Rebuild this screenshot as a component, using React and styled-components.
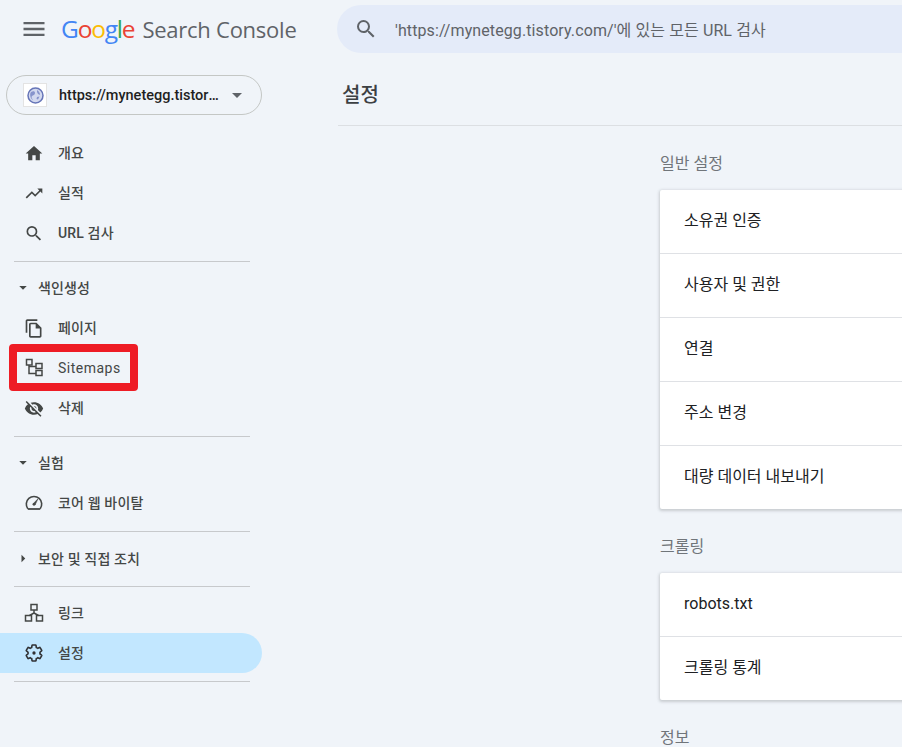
import styled, { createGlobalStyle } from "styled-components";
import {
  MdHome,
  MdTrendingUp,
  MdSearch,
  MdOutlineFileCopy,
  MdVisibilityOff,
  MdMenu,
  MdArrowDropDown,
  MdArrowRight,
} from "react-icons/md";

const KR = `Roboto, "Noto Sans CJK KR", sans-serif`;

const GlobalStyle = createGlobalStyle`
  html, body {
    margin: 0;
    padding: 0;
    height: 100%;
    overflow: hidden;
    background: #f0f4f9;
    font-family: ${KR};
  }
`;

const Page = styled.div`
  width: 902px;
  height: 747px;
  overflow: hidden;
  position: relative;
`;

const Header = styled.header`
  display: flex;
  align-items: center;
  height: 58px;
  padding-left: 20px;
`;

const MenuBtn = styled.div`
  display: flex;
  color: #5f6368;
  width: 28px;
  margin-right: 13px;
  font-size: 28px;
`;

const Logo = styled.div`
  display: flex;
  align-items: baseline;
  width: 276px;
  margin-top: -2px;
  font-family: "Open Sans", sans-serif;
  font-size: 22px;
  color: #5f6368;
  white-space: nowrap;
`;

const Letter = styled.span`
  color: ${(p) => p.$c};
  font-size: 24.5px;
  letter-spacing: -1.2px;
`;

const LogoRest = styled.span`
  margin-left: 8px;
  letter-spacing: -0.25px;
`;

const SearchBar = styled.div`
  flex: 1;
  height: 48px;
  margin-right: -60px;
  border-radius: 24px;
  background: #e4ebf9;
  display: flex;
  align-items: center;
  padding-left: 17px;
  color: #5f6368;
  font-size: 24px;
`;

const SearchText = styled.span`
  margin-left: 17px;
  font-size: 16px;
  letter-spacing: 0.1px;
  color: #5f6368;
  white-space: nowrap;
`;

const Body = styled.div`
  display: flex;
`;

const Side = styled.aside`
  width: 262px;
  flex: none;
  margin-right: 76px;
  padding-top: 17px;
`;

const Property = styled.div`
  margin-left: 6px;
  height: 38px;
  width: 238px;
  border: 1px solid #c4c7c5;
  border-radius: 20px;
  display: flex;
  align-items: center;
  padding-left: 16px;
  font-size: 14.5px;
  font-weight: 500;
  color: #1f1f1f;
  margin-bottom: 18px;
`;

const PropIcon = styled.div`
  width: 22px;
  height: 22px;
  background: #fff;
  border: 1px solid #e3e3e3;
  display: flex;
  align-items: center;
  justify-content: center;
  margin-right: 12px;
`;

const PropName = styled.span`
  width: 163px;
  overflow: hidden;
  text-overflow: ellipsis;
  white-space: nowrap;
`;

const PropArrow = styled.div`
  display: flex;
  margin-left: 3px;
  color: #5f6368;
  font-size: 24px;
`;

const NavItem = styled.div`
  display: flex;
  align-items: center;
  height: 40px;
  padding-left: 24px;
  border-radius: 0 20px 20px 0;
  background: ${(p) => (p.$active ? "#c2e7ff" : "transparent")};
  color: #444746;
  font-size: 14px;
  font-weight: 500;
  letter-spacing: 0.15px;
`;

const NavText = styled.span`
  position: relative;
  top: ${(p) => (p.$latin ? 0 : -1)}px;
  font-weight: ${(p) => (p.$latin ? 400 : 500)};
  letter-spacing: ${(p) => (p.$latin ? 0.5 : 0.15)}px;
`;

const IconBox = styled.div`
  display: flex;
  width: 20px;
  margin-right: 14px;
  font-size: 21px;
  color: #444746;
  justify-content: center;
`;

const Divider = styled.div`
  width: 236px;
  height: 1px;
  margin: ${(p) => p.$m || "8px 0 0 14px"};
  background: #c7c9cc;
`;

const Group = styled.div`
  display: flex;
  align-items: center;
  box-sizing: border-box;
  height: ${(p) => p.$h || 46}px;
  padding: ${(p) => (p.$h ? "0 0 2px 14px" : "4px 0 0 14px")};
  color: #444746;
  font-size: 14px;
  font-weight: 500;
  letter-spacing: 0.15px;
`;

const GroupArrow = styled.div`
  display: flex;
  width: 18px;
  margin-right: 6px;
  font-size: 21px;
  justify-content: center;
`;

const Main = styled.main`
  flex: 1;
  min-width: 0;
`;

const TitleBar = styled.div`
  height: 68px;
  box-sizing: border-box;
  border-bottom: 1px solid #dcdfe3;
  padding: 21px 0 0 4px;
  font-size: 20px;
  font-weight: 500;
  color: #3c4043;
`;

const Content = styled.div`
  padding-left: 322px;
`;

const SectionTitle = styled.div`
  height: 64px;
  box-sizing: border-box;
  padding-top: 24px;
  font-size: 16px;
  color: #70757a;
`;

const Card = styled.div`
  width: 500px;
  background: #fff;
  border-radius: 2px;
  box-shadow: 0 1px 3px 1px rgba(60, 64, 67, 0.22);
`;

const Row = styled.div`
  height: 63px;
  display: flex;
  align-items: center;
  padding-left: 24px;
  font-size: 16px;
  color: #202124;
  border-top: ${(p) => (p.$first ? "none" : "1px solid #dfe1e5")};
`;

const RowText = styled.span`
  position: relative;
  top: ${(p) => (p.$latin ? -1 : -3)}px;
`;

const RedMark = styled.div`
  position: absolute;
  left: 9px;
  top: 344px;
  width: 129px;
  height: 47px;
  box-sizing: border-box;
  border: 8px solid #ee1c25;
  border-radius: 4px;
`;

const GlobeIcon = () => (
  <svg width="17" height="17" viewBox="0 0 17 17">
    <circle cx="8.500" cy="8.500" r="7.500" fill="#d3d9ef" stroke="#6675b8" strokeWidth="1.500" />
    <path d="M4 5c2-1 4-1 4 1s-2 2-3 3 0 3 1 4-2-1-2.500-3S3 6 4 5zM10 3c2 1 3 3 3 5l-2-1-1-2z" fill="#8794cc" />
    <path d="M10 10l2.500-.5-1.500 3-1.500-.5z" fill="#8794cc" />
  </svg>
);

const SitemapIcon = () => (
  <svg width="20" height="20" viewBox="0 0 20 20" fill="none" stroke="#444746" strokeWidth="1.500">
    <rect x="2.500" y="1.500" width="5.500" height="5.500" />
    <rect x="12" y="5.500" width="6" height="5" />
    <rect x="12" y="12.500" width="6" height="5" />
    <path d="M5 7V15.500H12M5 8.500H12" />
  </svg>
);

const GaugeIcon = () => (
  <svg width="20" height="20" viewBox="0 0 20 20" fill="none" stroke="#444746">
    <path d="M3.800 15.700A7.700 7.700 0 1 1 16.200 15.700" strokeWidth="1.600" />
    <path d="M3.800 16H16.200" strokeWidth="1.800" />
    <path d="M9.300 10.500L14 5.800L11 12z" fill="#444746" strokeWidth="0.600" />
    <circle cx="10" cy="11.300" r="1.400" fill="#444746" stroke="none" />
  </svg>
);

const LinkIcon = () => (
  <svg width="20" height="20" viewBox="0 0 20 20" fill="none" stroke="#444746" strokeWidth="1.500">
    <rect x="7" y="1.500" width="6" height="5.500" />
    <rect x="1.500" y="12.500" width="6" height="5.500" />
    <rect x="12.500" y="12.500" width="6" height="5.500" />
    <path d="M10 7V10L5.500 12.500M10 10L14.500 12.500" />
  </svg>
);

const GearIcon = () => (
  <svg width="22" height="22" viewBox="0 0 24 24" fill="none" stroke="#303134" strokeWidth="1.900">
    <path d="M19.140 12.940c.04-.3.06-.61.06-.94 0-.32-.02-.64-.07-.94l2.030-1.580c.18-.14.23-.41.12-.61l-1.920-3.320c-.12-.22-.37-.29-.59-.22l-2.390.96c-.5-.38-1.030-.7-1.620-.94l-.36-2.540c-.04-.24-.24-.41-.48-.41h-3.840c-.24 0-.43.17-.47.41l-.36 2.540c-.59.24-1.130.57-1.620.94l-2.390-.96c-.22-.08-.47 0-.59.22L2.740 8.870c-.12.21-.08.47.12.61l2.030 1.580c-.05.3-.07.62-.07.94s.02.64.07.94l-2.030 1.580c-.18.14-.23.41-.12.61l1.920 3.320c.12.22.37.29.59.22l2.390-.96c.5.38 1.030.7 1.620.94l.36 2.540c.05.24.24.41.48.41h3.840c.24 0 .44-.17.47-.41l.36-2.540c.59-.24 1.130-.56 1.620-.94l2.390.96c.22.08.47 0 .59-.22l1.920-3.320c.12-.22.07-.47-.12-.61l-2.010-1.580z" />
    <circle cx="12" cy="12" r="2" fill="#303134" stroke="none" />
  </svg>
);

const navTop = [
  { icon: <MdHome />, label: "개요" },
  { icon: <MdTrendingUp />, label: "실적" },
  { icon: <MdSearch />, label: "URL 검사" },
];

const navIndex = [
  { icon: <MdOutlineFileCopy />, label: "페이지" },
  { icon: <SitemapIcon />, label: "Sitemaps", latin: true },
  { icon: <MdVisibilityOff />, label: "삭제" },
];

const Nav = ({ icon, label, active, latin }) => (
  <NavItem $active={active}>
    <IconBox>{icon}</IconBox>
    <NavText $latin={latin}>{label}</NavText>
  </NavItem>
);

export default function App() {
  return (
    <Page>
      <GlobalStyle />
      <Header>
        <MenuBtn>
          <MdMenu />
        </MenuBtn>
        <Logo>
          <Letter $c="#4285f4">G</Letter>
          <Letter $c="#ea4335">o</Letter>
          <Letter $c="#fbbc05">o</Letter>
          <Letter $c="#4285f4">g</Letter>
          <Letter $c="#34a853">l</Letter>
          <Letter $c="#ea4335">e</Letter>
          <LogoRest>Search Console</LogoRest>
        </Logo>
        <SearchBar>
          <MdSearch />
          <SearchText>'https://mynetegg.tistory.com/'에 있는 모든 URL 검사</SearchText>
        </SearchBar>
      </Header>
      <Body>
        <Side>
          <Property>
            <PropIcon>
              <GlobeIcon />
            </PropIcon>
            <PropName>https://mynetegg.tistory.com/</PropName>
            <PropArrow>
              <MdArrowDropDown />
            </PropArrow>
          </Property>
          {navTop.map((n) => (
            <Nav key={n.label} {...n} />
          ))}
          <Divider />
          <Group>
            <GroupArrow><MdArrowDropDown /></GroupArrow>색인생성
          </Group>
          {navIndex.map((n) => (
            <Nav key={n.label} {...n} />
          ))}
          <Divider />
          <Group>
            <GroupArrow><MdArrowDropDown /></GroupArrow>실험
          </Group>
          <Nav icon={<GaugeIcon />} label="코어 웹 바이탈" />
          <Divider />
          <Group $h={54}>
            <GroupArrow><MdArrowRight /></GroupArrow>보안 및 직접 조치
          </Group>
          <Divider $m="0 0 6px 14px" />
          <Nav icon={<LinkIcon />} label="링크" />
          <Nav icon={<GearIcon />} label="설정" active />
          <Divider />
        </Side>
        <Main>
          <TitleBar>설정</TitleBar>
          <Content>
            <SectionTitle>일반 설정</SectionTitle>
            <Card>
              <Row $first><RowText>소유권 인증</RowText></Row>
              <Row><RowText>사용자 및 권한</RowText></Row>
              <Row><RowText>연결</RowText></Row>
              <Row><RowText>주소 변경</RowText></Row>
              <Row><RowText>대량 데이터 내보내기</RowText></Row>
            </Card>
            <SectionTitle>크롤링</SectionTitle>
            <Card>
              <Row $first><RowText $latin>robots.txt</RowText></Row>
              <Row><RowText>크롤링 통계</RowText></Row>
            </Card>
            <SectionTitle>정보</SectionTitle>
          </Content>
        </Main>
      </Body>
      <RedMark />
    </Page>
  );
}
